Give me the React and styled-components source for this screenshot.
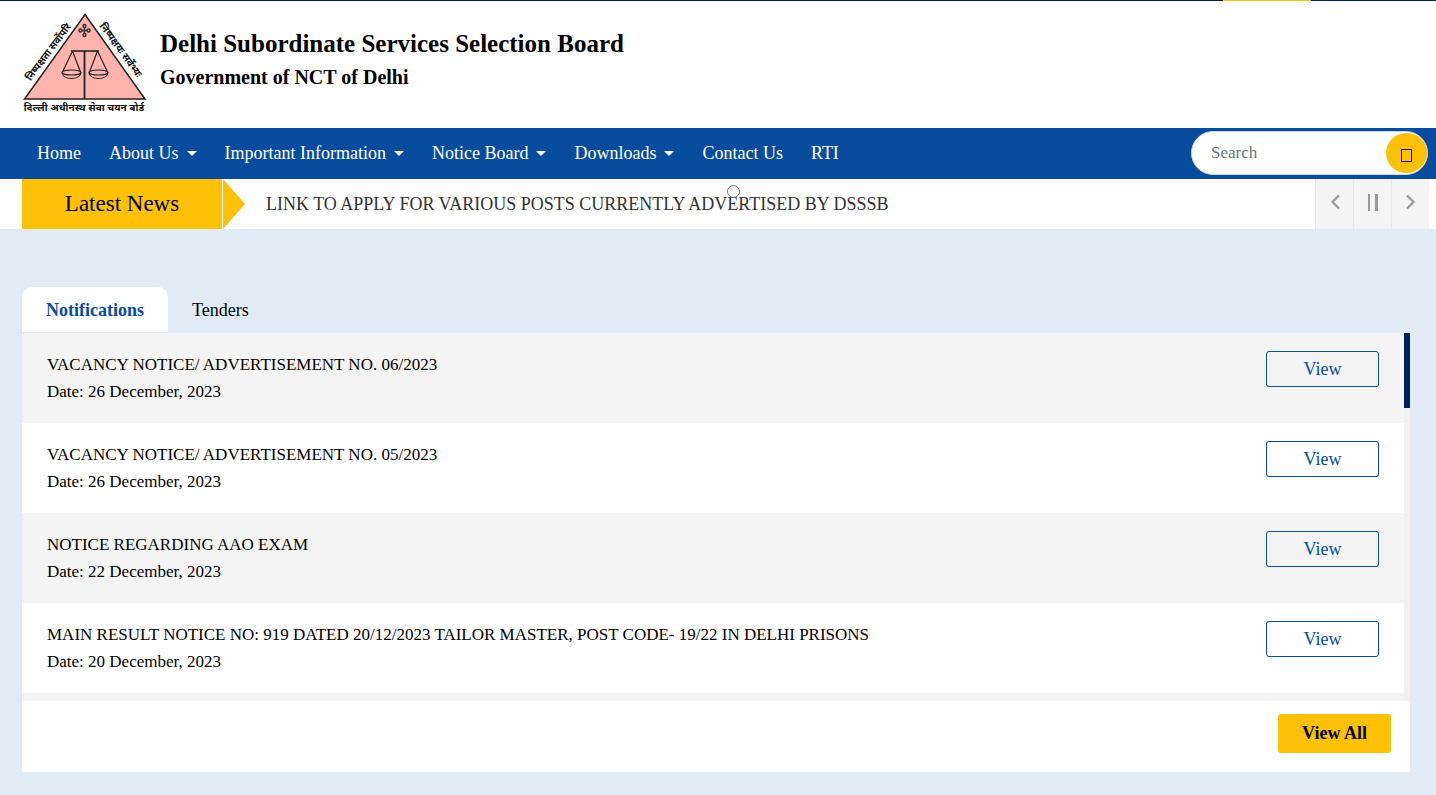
import { useState } from "react";
import styled, { createGlobalStyle } from "styled-components";

const GlobalStyle = createGlobalStyle`
  * {
    box-sizing: border-box;
  }

  body {
    margin: 0;
    background: #e1ebf5;
    color: #000;
    font-family: "Liberation Serif", "Times New Roman", serif;
    font-size: 17px;
  }

  button, input {
    font-family: inherit;
  }
`;

const TopBar = styled.div`
  display: flex;
  justify-content: flex-end;
  height: 1px;
  padding-right: 125px;
  background: #00205b;
`;

const TopBarAccent = styled.div`
  width: 88px;
  background: #ffc107;
`;

const Header = styled.header`
  display: flex;
  align-items: flex-start;
  gap: 12px;
  height: 127px;
  padding: 11px 22px 0;
  background: #fff;
`;

const Brand = styled.div`
  display: flex;
  flex-direction: column;
  padding-top: 16px;
`;

const Title = styled.h1`
  margin: 0;
  font-size: 25px;
  line-height: 32px;
`;

const Subtitle = styled.h2`
  margin: 0;
  font-size: 20px;
  line-height: 34px;
`;

const Nav = styled.nav`
  display: flex;
  align-items: center;
  justify-content: space-between;
  height: 51px;
  padding: 0 8px 1px 37px;
  background: #084c9e;
`;

const Menu = styled.ul`
  display: flex;
  gap: 28px;
  margin: 0;
  padding: 0;
  list-style: none;
`;

const MenuLink = styled.a`
  display: flex;
  align-items: center;
  gap: 8px;
  color: #fff;
  font-size: 18px;
  line-height: 28px;
  text-decoration: none;
  white-space: nowrap;
`;

const Caret = styled.span`
  border-top: 5px solid #fff;
  border-left: 5px solid transparent;
  border-right: 5px solid transparent;
`;

const SearchForm = styled.form`
  display: flex;
  align-items: center;
  width: 237px;
  height: 44px;
  border: 1px solid #ced4da;
  border-radius: 22px;
  background: #fff;
`;

const SearchInput = styled.input`
  flex: 1;
  min-width: 0;
  padding: 0 0 0 19px;
  border: 0;
  outline: 0;
  background: transparent;
  font-size: 17px;

  &::placeholder {
    color: #6c757d;
    opacity: 1;
  }
`;

const SearchButton = styled.button`
  display: flex;
  align-items: center;
  justify-content: center;
  width: 41px;
  height: 40px;
  padding: 4px 0 0;
  border: 0;
  border-radius: 50%;
  background: #ffc107;
`;

const News = styled.section`
  display: flex;
  height: 50px;
  padding: 0 7px 0 22px;
  background: #fff;
`;

const NewsLabel = styled.h2`
  width: 200px;
  margin: 0;
  background: #ffc107;
  font-size: 23px;
  font-weight: 400;
  line-height: 49px;
  text-align: center;
`;

const NewsArrow = styled.span`
  margin-left: 1px;
  border-top: 25px solid transparent;
  border-bottom: 25px solid transparent;
  border-left: 22px solid #ffc107;
`;

const Ticker = styled.div`
  position: relative;
  flex: 1;
  padding-left: 21px;
`;

const TickerLink = styled.a`
  color: #333;
  font-size: 18px;
  line-height: 50px;
  text-decoration: none;
`;

const TickerDot = styled.span`
  position: absolute;
  top: 6px;
  left: 482px;
  width: 13px;
  height: 13px;
  border: 1px solid #777;
  border-radius: 50%;
`;

const Controls = styled.div`
  display: flex;
`;

const ControlButton = styled.button`
  display: flex;
  align-items: center;
  justify-content: center;
  width: 38px;
  padding: 0 0 4px;
  border: 0;
  border-left: 1px solid #e9e9e9;
  background: #f4f4f4;
`;

const Main = styled.main`
  padding: 58px 26px 23px 22px;
`;

const Tabs = styled.div`
  display: flex;
`;

const Tab = styled.button`
  height: 45px;
  margin-bottom: 1px;
  padding: 2px 24px 0;
  border: 0;
  border-radius: 10px 10px 0 0;
  background: ${({ $active }) => ($active ? "#fff" : "transparent")};
  color: ${({ $active }) => ($active ? "#084c9e" : "#000")};
  font-size: 18px;
  font-weight: ${({ $active }) => ($active ? 700 : 400)};
`;

const Panel = styled.div`
  background: #fff;
`;

const ScrollArea = styled.div`
  display: flex;
  background: #f4f4f4;
`;

const List = styled.ul`
  flex: 1;
  margin: 0;
  padding: 0 0 8px;
  list-style: none;
`;

const Item = styled.li`
  display: flex;
  justify-content: space-between;
  align-items: flex-start;
  height: 90px;
  padding: 18px 25px;
  background: #fff;

  &:nth-child(odd) {
    background: #f4f4f4;
  }
`;

const ItemText = styled.p`
  margin: 0;
  line-height: 27px;
`;

const ViewLink = styled.a`
  width: 113px;
  border: 1px solid #084c9e;
  border-radius: 3px;
  color: #084c9e;
  font-size: 18px;
  line-height: 35px;
  height: 36px;
  text-align: center;
  text-decoration: none;
`;

const ScrollTrack = styled.div`
  width: 6px;
  background: #f1f1f1;
`;

const ScrollThumb = styled.div`
  height: 75px;
  background: #00205b;
`;

const PanelFooter = styled.div`
  display: flex;
  justify-content: flex-end;
  padding: 13px 19px 19px;
`;

const ViewAll = styled.a`
  width: 113px;
  border-radius: 3px;
  background: #ffc107;
  color: #000;
  font-size: 18px;
  font-weight: 700;
  line-height: 39px;
  text-align: center;
  text-decoration: none;
`;

const menu = [
  { label: "Home" },
  { label: "About Us", dropdown: true },
  { label: "Important Information", dropdown: true },
  { label: "Notice Board", dropdown: true },
  { label: "Downloads", dropdown: true },
  { label: "Contact Us" },
  { label: "RTI" },
];

const notifications = [
  { title: "VACANCY NOTICE/ ADVERTISEMENT NO. 06/2023", date: "26 December, 2023" },
  { title: "VACANCY NOTICE/ ADVERTISEMENT NO. 05/2023", date: "26 December, 2023" },
  { title: "NOTICE REGARDING AAO EXAM", date: "22 December, 2023" },
  {
    title: "MAIN RESULT NOTICE NO: 919 DATED 20/12/2023 TAILOR MASTER, POST CODE- 19/22 IN DELHI PRISONS",
    date: "20 December, 2023",
  },
];

function Logo() {
  return (
    <svg width="126" height="106" viewBox="0 0 126 106" role="img" aria-label="DSSSB">
      <path d="M63 2.500 L123 87 H2.500 Z" fill="#ffb3ad" stroke="#222" strokeWidth="1.500" />
      <g fill="none" stroke="#222" strokeWidth="1.200">
        <path d="M62.500 39 V87" strokeWidth="1.800" />
        <path d="M49 39 H77" strokeWidth="1.600" />
        <path d="M50.500 39 L40.500 60 M50.500 39 L58.500 60 M75.500 39 L67.500 60 M75.500 39 L85.500 60" />
        <ellipse cx="49.500" cy="60.500" rx="9.500" ry="2.500" />
        <ellipse cx="76.500" cy="60.500" rx="9.500" ry="2.500" />
        <path d="M40 60.500 Q41 66.500 49.500 66.500 Q58 66.500 59 60.500 M67 60.500 Q68 66.500 76.500 66.500 Q85 66.500 86 60.500" />
      </g>
      <g fill="#ffb3ad" stroke="#333" strokeWidth="1.400">
        <path d="M62.500 15 V22 M59 18.500 H66" />
        <circle cx="62.500" cy="14" r="1.500" />
        <circle cx="62.500" cy="23" r="1.500" />
        <circle cx="58.500" cy="18.500" r="1.500" />
        <circle cx="66.500" cy="18.500" r="1.500" />
      </g>
      <g fill="#111" fontFamily="'Noto Sans Devanagari', 'Noto Sans', sans-serif" fontWeight="700" textAnchor="middle">
        <text x="62" y="99" fontSize="10">दिल्ली अधीनस्थ सेवा चयन बोर्ड</text>
        <text transform="translate(29 42) rotate(-53)" fontSize="10">निष्पक्षता सर्वोपरि</text>
        <text transform="translate(96 40) rotate(54)" fontSize="10">निष्पक्षयः सर्वेभ्यः</text>
      </g>
    </svg>
  );
}

function App() {
  const [tab, setTab] = useState("Notifications");

  return (
    <>
      <GlobalStyle />
      <TopBar>
        <TopBarAccent />
      </TopBar>
      <Header>
        <Logo />
        <Brand>
          <Title>Delhi Subordinate Services Selection Board</Title>
          <Subtitle>Government of NCT of Delhi</Subtitle>
        </Brand>
      </Header>

      <Nav>
        <Menu>
          {menu.map(({ label, dropdown }) => (
            <li key={label}>
              <MenuLink href="#">
                {label}
                {dropdown && <Caret />}
              </MenuLink>
            </li>
          ))}
        </Menu>
        <SearchForm onSubmit={(e) => e.preventDefault()}>
          <SearchInput type="text" placeholder="Search" aria-label="Search" />
          <SearchButton type="submit" aria-label="Submit search">
            <svg width="11" height="13" viewBox="0 0 11 13">
              <rect x="0.500" y="0.500" width="10" height="12" fill="none" stroke="#000" strokeWidth="0.900" />
            </svg>
          </SearchButton>
        </SearchForm>
      </Nav>

      <News>
        <NewsLabel>Latest News</NewsLabel>
        <NewsArrow />
        <Ticker>
          <TickerLink href="#">LINK TO APPLY FOR VARIOUS POSTS CURRENTLY ADVERTISED BY DSSSB</TickerLink>
          <TickerDot />
        </Ticker>
        <Controls>
          <ControlButton type="button" aria-label="Previous">
            <svg width="10" height="14" viewBox="0 0 10 14" fill="none" stroke="#999" strokeWidth="2.200">
              <path d="M9 0.500 L2.500 7 L9 13.500" />
            </svg>
          </ControlButton>
          <ControlButton type="button" aria-label="Pause">
            <svg width="11" height="17" viewBox="0 0 11 17" fill="#999">
              <path d="M1 0 H3 V17 H1 Z M8 0 H11 V17 H8 Z" />
            </svg>
          </ControlButton>
          <ControlButton type="button" aria-label="Next">
            <svg width="10" height="14" viewBox="0 0 10 14" fill="none" stroke="#999" strokeWidth="2.200">
              <path d="M1 0.500 L7.500 7 L1 13.500" />
            </svg>
          </ControlButton>
        </Controls>
      </News>

      <Main>
        <Tabs role="tablist">
          {["Notifications", "Tenders"].map((name) => (
            <Tab
              key={name}
              type="button"
              role="tab"
              aria-selected={tab === name}
              $active={tab === name}
              onClick={() => setTab(name)}
            >
              {name}
            </Tab>
          ))}
        </Tabs>
        <Panel>
          <ScrollArea>
            <List>
              {notifications.map(({ title, date }) => (
                <Item key={title}>
                  <div>
                    <ItemText>{title}</ItemText>
                    <ItemText>Date: {date}</ItemText>
                  </div>
                  <ViewLink href="#">View</ViewLink>
                </Item>
              ))}
            </List>
            <ScrollTrack>
              <ScrollThumb />
            </ScrollTrack>
          </ScrollArea>
          <PanelFooter>
            <ViewAll href="#">View All</ViewAll>
          </PanelFooter>
        </Panel>
      </Main>
    </>
  );
}

export default App;
